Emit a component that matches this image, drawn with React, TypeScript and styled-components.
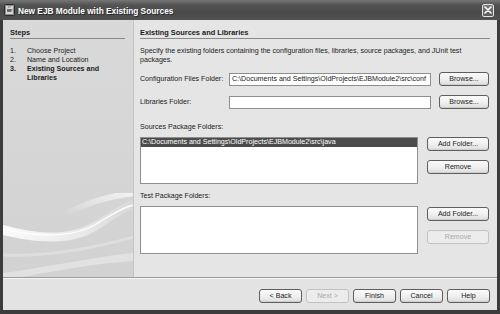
import React from "react";
import styled, { createGlobalStyle } from "styled-components";

const GlobalStyle = createGlobalStyle`
  html, body { margin: 0; padding: 0; background: #3a3a3a; }
  body { font-family: "Liberation Sans", Arial, sans-serif; }
  * { box-sizing: border-box; }
`;

const Window = styled.div`
  width: 500px;
  height: 314px;
  display: flex;
  flex-direction: column;
  background: #3a3a3a;
  overflow: hidden;
`;

const TitleBar = styled.div`
  height: 20px;
  flex: none;
  display: flex;
  align-items: center;
  padding: 0 6px 0 4px;
  gap: 3px;
  background: linear-gradient(#767676 0%, #535353 25%, #4a4a4a 60%, #515151 100%);
`;

const TitleText = styled.div`
  flex: 1;
  color: #fff;
  font-weight: bold;
  font-size: 8.3px;
  text-shadow: 1px 1px 0 #2a2a2a;
  padding-top: 1px;
`;

const CloseBox = styled.div`
  width: 12px;
  height: 13px;
  border: 1px solid #e4e4e4;
  border-radius: 2px;
  background: linear-gradient(#7a7a7a, #5a5a5a);
  display: flex;
  align-items: center;
  justify-content: center;
`;

const Frame = styled.div`
  flex: 1;
  display: flex;
  flex-direction: column;
  border-style: solid;
  border-color: #3c3c3c;
  border-width: 0 3px 4px 3px;
`;

const Body = styled.div`
  flex: 1;
  display: flex;
  min-height: 0;
`;

const StepsPanel = styled.div`
  width: 131px;
  flex: none;
  display: flex;
  flex-direction: column;
  background: linear-gradient(#d9d9d9, #d2d2d2);
  border-right: 1px solid #c4c4c4;
  padding: 8px 8px 0 7px;
  overflow: hidden;
`;

const PanelHeading = styled.div`
  font-size: 7.4px;
  font-weight: bold;
  line-height: 9px;
  color: #1a1a1a;
  padding-bottom: 1px;
  border-bottom: 1px solid #8a8a8a;
  white-space: nowrap;
`;

const StepList = styled.ol`
  list-style: none;
  margin: 8px 0 0 0;
  padding: 0;
`;

const StepItem = styled.li<{ $current?: boolean }>`
  display: grid;
  grid-template-columns: 17px 1fr;
  font-size: 7.1px;
  line-height: 9px;
  color: #222;
  font-weight: ${(p) => (p.$current ? "bold" : "normal")};
`;

const WaveArt = styled.svg`
  margin-top: auto;
  margin-left: -7px;
  margin-right: -8px;
  display: block;
  flex: none;
`;

const Content = styled.div`
  flex: 1;
  min-width: 0;
  background: #e5e5e5;
  padding: 8px 7px 0 6px;
  display: flex;
  flex-direction: column;
`;

const Description = styled.p`
  margin: 8px 0 0 0;
  max-width: 340px;
  font-size: 7.1px;
  line-height: 9px;
  color: #222;
`;

const FieldRow = styled.div<{ $gap: number }>`
  display: grid;
  grid-template-columns: 81px 202px 50px;
  column-gap: 8px;
  align-items: center;
  height: 14px;
  margin-top: ${(p) => p.$gap}px;
`;

const Label = styled.span`
  font-size: 7.1px;
  line-height: 9px;
  color: #222;
  white-space: nowrap;
`;

const TextInput = styled.div`
  height: 13px;
  background: #fff;
  border: 1px solid #8e8e8e;
  font-size: 7.1px;
  line-height: 11px;
  padding-left: 2px;
  color: #222;
  white-space: nowrap;
  overflow: hidden;
`;

const Button = styled.button<{ $disabled?: boolean }>`
  height: 14px;
  padding: 0;
  margin: 0;
  font-family: "Liberation Sans", Arial, sans-serif;
  font-size: 7.1px;
  line-height: 12px;
  color: ${(p) => (p.$disabled ? "#a8a8a8" : "#222")};
  border: 1px solid ${(p) => (p.$disabled ? "#c2c2c2" : "#5e5e5e")};
  border-radius: 3px;
  background: ${(p) =>
    p.$disabled ? "#ececec" : "linear-gradient(#fbfbfb, #ededed 60%, #dcdcdc)"};
  box-shadow: ${(p) => (p.$disabled ? "none" : "inset 0 -1px 0 #cfcfcf")};
`;

const SectionLabel = styled(Label)<{ $gap: number }>`
  display: block;
  margin-top: ${(p) => p.$gap}px;
`;

const ListSection = styled.div<{ $height: number }>`
  display: grid;
  grid-template-columns: 278px 62px;
  column-gap: 9px;
  height: ${(p) => p.$height}px;
  margin-top: 5px;
`;

const ListBox = styled.div`
  background: #fff;
  border: 1px solid #8e8e8e;
  padding: 0;
`;

const ListRow = styled.div<{ $selected?: boolean }>`
  height: 9px;
  font-size: 7.1px;
  line-height: 9px;
  padding-left: 1px;
  white-space: nowrap;
  color: ${(p) => (p.$selected ? "#fff" : "#222")};
  background: ${(p) => (p.$selected ? "#4c4c4c" : "transparent")};
`;

const ButtonColumn = styled.div<{ $top: number }>`
  display: flex;
  flex-direction: column;
  gap: 9px;
  padding-top: ${(p) => p.$top}px;
`;

const Footer = styled.div`
  height: 33px;
  flex: none;
  background: #e3e3e3;
  border-top: 1px solid #9c9c9c;
  box-shadow: inset 0 1px 0 #f6f6f6;
  display: flex;
  align-items: center;
  justify-content: flex-end;
  gap: 4px;
  padding: 4px 7px 0 0;
`;

const FooterButton = styled(Button)`
  width: 43px;
`;

const AppIcon = () => (
  <svg width="11" height="12" viewBox="0 0 11 12">
    <rect x="0.5" y="0.5" width="10" height="11" rx="1" fill="#8a8a8a" stroke="#2a2a2a" />
    <rect x="2" y="2" width="7" height="8" fill="#d8d8d8" />
    <path d="M3 5h4v3H3z" fill="#6a6a6a" />
    <path d="M7 5.5h1v1.5H7" fill="none" stroke="#6a6a6a" strokeWidth="0.8" />
    <path d="M4 4c0-1 1-1 1-2M5.6 4c0-1 1-1 1-2" stroke="#6a6a6a" strokeWidth="0.6" fill="none" />
  </svg>
);

const CloseIcon = () => (
  <svg width="8" height="8" viewBox="0 0 8 8">
    <path d="M1 1L7 7M7 1L1 7" stroke="#fff" strokeWidth="1.6" strokeLinecap="round" />
  </svg>
);

const Wave = () => (
  <WaveArt width="131" height="84" viewBox="0 0 131 84">
    <defs>
      <linearGradient id="wg1" x1="0" y1="0" x2="1" y2="0">
        <stop offset="0" stopColor="#ffffff" stopOpacity="0.9" />
        <stop offset="0.6" stopColor="#ffffff" stopOpacity="0.5" />
        <stop offset="1" stopColor="#ffffff" stopOpacity="0.1" />
      </linearGradient>
      <linearGradient id="wg2" x1="0" y1="1" x2="1" y2="0">
        <stop offset="0" stopColor="#ffffff" stopOpacity="0" />
        <stop offset="1" stopColor="#ffffff" stopOpacity="0.7" />
      </linearGradient>
    </defs>
    <path d="M0 32 C30 40 60 44 85 32 C100 25 115 12 131 6 L131 16 C112 22 100 37 80 44 C55 52 25 48 0 42 Z" fill="url(#wg1)" />
    <path d="M0 36 C35 44 70 46 95 30 C108 22 120 14 131 12" stroke="#ffffff" strokeWidth="1.4" fill="none" opacity="0.9" />
    <path d="M60 22 C80 12 100 4 131 0" stroke="url(#wg2)" strokeWidth="6" fill="none" />
    <path d="M0 80 C30 76 60 70 100 64 C112 62 122 61 131 60 L131 68 C100 70 60 76 20 84 L0 84 Z" fill="#ffffff" opacity="0.35" />
    <path d="M0 62 C40 64 80 58 131 44" stroke="#ffffff" strokeWidth="3" fill="none" opacity="0.25" />
  </WaveArt>
);

export default function App() {
  return (
    <>
      <GlobalStyle />
      <Window>
        <TitleBar>
          <AppIcon />
          <TitleText>New EJB Module with Existing Sources</TitleText>
          <CloseBox>
            <CloseIcon />
          </CloseBox>
        </TitleBar>
        <Frame>
          <Body>
            <StepsPanel>
              <PanelHeading>Steps</PanelHeading>
              <StepList>
                <StepItem>
                  <span>1.</span>
                  <span>Choose Project</span>
                </StepItem>
                <StepItem>
                  <span>2.</span>
                  <span>Name and Location</span>
                </StepItem>
                <StepItem $current>
                  <span>3.</span>
                  <span>Existing Sources and Libraries</span>
                </StepItem>
              </StepList>
              <Wave />
            </StepsPanel>
            <Content>
              <PanelHeading>Existing Sources and Libraries</PanelHeading>
              <Description>
                Specify the existing folders containing the configuration files, libraries, source packages, and JUnit test packages.
              </Description>
              <FieldRow $gap={7}>
                <Label>Configuration Files Folder:</Label>
                <TextInput>C:\Documents and Settings\OldProjects\EJBModule2\src\conf</TextInput>
                <Button>Browse...</Button>
              </FieldRow>
              <FieldRow $gap={9}>
                <Label>Libraries Folder:</Label>
                <TextInput />
                <Button>Browse...</Button>
              </FieldRow>
              <SectionLabel $gap={14}>Sources Package Folders:</SectionLabel>
              <ListSection $height={47}>
                <ListBox>
                  <ListRow $selected>C:\Documents and Settings\OldProjects\EJBModule2\src\java</ListRow>
                </ListBox>
                <ButtonColumn $top={0}>
                  <Button>Add Folder...</Button>
                  <Button>Remove</Button>
                </ButtonColumn>
              </ListSection>
              <SectionLabel $gap={8}>Test Package Folders:</SectionLabel>
              <ListSection $height={48}>
                <ListBox />
                <ButtonColumn $top={1}>
                  <Button>Add Folder...</Button>
                  <Button $disabled>Remove</Button>
                </ButtonColumn>
              </ListSection>
            </Content>
          </Body>
          <Footer>
            <FooterButton>&lt; Back</FooterButton>
            <FooterButton $disabled>Next &gt;</FooterButton>
            <FooterButton>Finish</FooterButton>
            <FooterButton>Cancel</FooterButton>
            <FooterButton>Help</FooterButton>
          </Footer>
        </Frame>
      </Window>
    </>
  );
}
